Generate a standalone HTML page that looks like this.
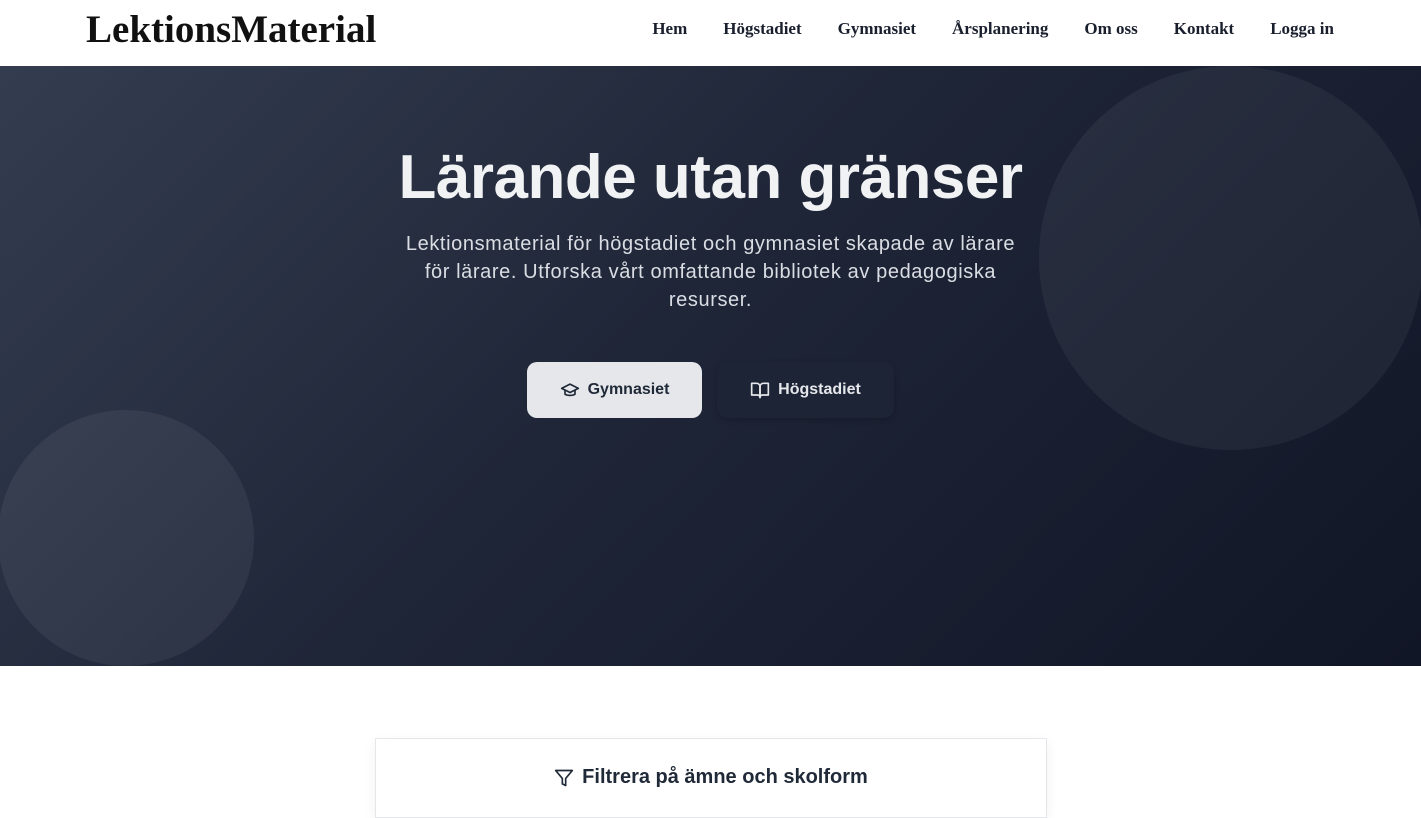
<!DOCTYPE html>
<html><head><meta charset="utf-8"><style>
*{margin:0;padding:0;box-sizing:border-box}
body{width:1421px;height:789px;overflow:hidden;background:#fff;font-family:"Liberation Sans",sans-serif;position:relative}
header{height:66px;background:#fff;position:relative}
.logo{position:absolute;left:86px;top:7px;font-family:"Liberation Serif",serif;font-weight:bold;font-size:39px;color:#111;letter-spacing:0px}
nav{position:absolute;right:87px;top:19px;display:flex;gap:36px;font-family:"Liberation Serif",serif;font-weight:bold;font-size:17px;color:#1a1f2e}
.hero{position:absolute;top:66px;left:0;width:1421px;height:600px;overflow:hidden;background:linear-gradient(135deg,#343d50 0%,#1f2638 45%,#111626 100%)}
.c1{position:absolute;left:1039px;top:0;width:384px;height:384px;border-radius:50%;background:rgba(255,255,255,0.05)}
.c2{position:absolute;left:-2px;top:344px;width:256px;height:256px;border-radius:50%;background:rgba(255,255,255,0.06)}
h1{position:absolute;top:76px;width:100%;text-align:center;color:#f1f2f4;font-size:62px;font-weight:bold;letter-spacing:-0.5px}
.sub{position:absolute;top:164px;left:397px;width:627px;text-align:center;color:#dadde3;font-size:20px;line-height:28px;letter-spacing:0.6px}
.btn{position:absolute;top:296px;height:56px;border-radius:10px;display:flex;align-items:center;justify-content:center;gap:8px;font-weight:bold;font-size:16px}
.b1{left:527px;width:175px;background:#e5e7eb;color:#1f2937}
.b2{left:717px;width:177px;background:#1d2436;color:#e5e7eb;box-shadow:0 2px 6px rgba(0,0,0,.2)}
.card{position:absolute;left:375px;top:738px;width:672px;height:80px;border:1px solid #e5e7eb;box-shadow:0 4px 12px rgba(0,0,0,.06);background:#fff}
.card div{position:absolute;top:27px;width:100%;display:flex;justify-content:center;align-items:center;gap:8px;font-weight:bold;font-size:20px;color:#1f2937}
</style></head><body>
<header><div class="logo">LektionsMaterial</div>
<nav><span>Hem</span><span>Högstadiet</span><span>Gymnasiet</span><span>Årsplanering</span><span>Om oss</span><span>Kontakt</span><span>Logga in</span></nav></header>
<div class="hero"><div class="c1"></div><div class="c2"></div>
<h1>Lärande utan gränser</h1>
<div class="sub">Lektionsmaterial för högstadiet och gymnasiet skapade av lärare för lärare. Utforska vårt omfattande bibliotek av pedagogiska resurser.</div>
<div class="btn b1"><svg width="20" height="20" viewBox="0 0 24 24" fill="none" stroke="#1f2937" stroke-width="2" stroke-linejoin="round"><path d="M2 10l10-5 10 5-10 5z"/><path d="M6 12v5c3 2 9 2 12 0v-5"/></svg>Gymnasiet</div>
<div class="btn b2"><svg width="20" height="20" viewBox="0 0 24 24" fill="none" stroke="#e5e7eb" stroke-width="2" stroke-linejoin="round"><path d="M2 4h6a4 4 0 0 1 4 4v13a3 3 0 0 0-3-3H2z"/><path d="M22 4h-6a4 4 0 0 0-4 4v13a3 3 0 0 1 3-3h7z"/></svg>Högstadiet</div>
</div>
<div class="card"><div><svg width="20" height="20" viewBox="0 0 24 24" fill="none" stroke="#1f2937" stroke-width="2" stroke-linejoin="round"><path d="M22 3H2l8 9.5V19l4 2v-8.5z"/></svg>Filtrera på ämne och skolform</div></div>
</body></html>
